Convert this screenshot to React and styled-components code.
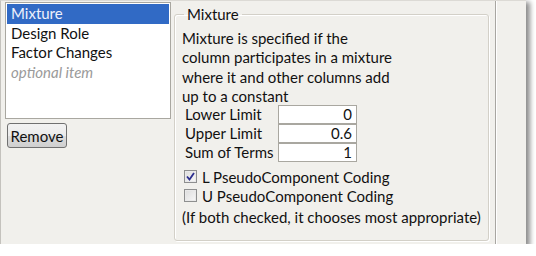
import React from 'react';
import styled, { createGlobalStyle } from 'styled-components';

const Global = createGlobalStyle`
  html, body {
    margin: 0;
    padding: 0;
    background: #ffffff;
  }
  body {
    font-family: Lato, "Noto Sans", sans-serif;
    font-size: 15px;
    color: #111;
  }
`;

const Window = styled.div`
  width: 526px;
  height: 244px;
  background: #f1f0ec;
  border-left: 1px solid #c4c2bd;
  border-top: 1px solid #dcdad5;
  box-shadow: 3px 3px 5px 1px rgba(0, 0, 0, 0.45);
  display: flex;
  box-sizing: border-box;
`;

const LeftCol = styled.div`
  width: 168px;
  padding: 1px 0 0 4px;
  display: flex;
  flex-direction: column;
  align-items: flex-start;
`;

const ListBox = styled.div`
  width: 166px;
  height: 117px;
  box-sizing: border-box;
  background: #fff;
  border: 1px solid #a9a7a0;
  padding: 1px;
`;

const ListItem = styled.div`
  height: 19.5px;
  line-height: 19px;
  padding-left: 4px;
  background: ${p => (p.$selected ? '#316ac5' : 'transparent')};
  color: ${p => (p.$selected ? '#eef0fb' : p.$muted ? '#9a9a9a' : '#111')};
  font-style: ${p => (p.$muted ? 'italic' : 'normal')};
`;

const Button = styled.button`
  margin: 4px 0 0 2px;
  width: 60px;
  height: 25px;
  border: 1px solid #707070;
  border-radius: 3px;
  background: linear-gradient(#f2f2f2, #ebebeb 50%, #dddddd 51%, #cfcfcf);
  font-family: inherit;
  font-size: 15px;
  color: #111;
  padding: 0;
`;

const Group = styled.fieldset`
  margin: 4px 0 0 1px;
  width: 315px;
  height: 236px;
  box-sizing: border-box;
  border: 1px solid #d3d0c8;
  box-shadow: inset 1px 1px 0 #fff, 1px 1px 0 #fff;
  border-radius: 3px;
  padding: 0 0 0 7px;
`;

const Legend = styled.legend`
  padding: 0 3px;
  margin-left: 2px;
  font-size: 15px;
  line-height: 18px;
`;

const Description = styled.p`
  margin: 6px 0 0;
  line-height: 19.3px;
`;

const Fields = styled.div`
  display: grid;
  grid-template-columns: 93px 79px;
  grid-auto-rows: 18px;
  row-gap: 1px;
  margin: -1px 0 0 3px;
`;

const FieldLabel = styled.div`
  line-height: 18px;
`;

const FieldValue = styled.div`
  background: #fff;
  border: 1px solid #a9a7a0;
  text-align: right;
  line-height: 17px;
  padding-right: 4px;
  box-sizing: border-box;
  height: 19px;
`;

const Checks = styled.div`
  margin-top: 7px;
  display: flex;
  flex-direction: column;
  gap: 2px;
`;

const CheckRow = styled.label`
  display: flex;
  align-items: center;
  gap: 5px;
  height: 17px;
  padding-left: 2px;
`;

const Box = styled.span`
  width: 11px;
  height: 11px;
  border: 1px solid #8e8f8f;
  background: linear-gradient(135deg, #dcdcdc, #f8f8f8);
  box-shadow: inset 0 0 0 1px #e9e9e9;
  display: flex;
  align-items: center;
  justify-content: center;
`;

const Note = styled.div`
  margin-top: 4px;
`;

const Divider = styled.div`
  margin-left: 6px;
  width: 1px;
  border-right: 1px solid #fff;
  background: #a8a6a1;
`;

const Check = ({ checked, children }) => (
  <CheckRow>
    <Box>
      {checked && (
        <svg width="9" height="9" viewBox="0 0 9 9">
          <path d="M1 4.5 L3.5 7.5 L8 1" fill="none" stroke="#2b2e8e" strokeWidth="1.8" />
        </svg>
      )}
    </Box>
    {children}
  </CheckRow>
);

const App = () => (
  <>
    <Global />
    <Window>
      <LeftCol>
        <ListBox>
          <ListItem $selected>Mixture</ListItem>
          <ListItem>Design Role</ListItem>
          <ListItem>Factor Changes</ListItem>
          <ListItem $muted>optional item</ListItem>
        </ListBox>
        <Button>Remove</Button>
      </LeftCol>
      <Group>
        <Legend>Mixture</Legend>
        <Description>
          Mixture is specified if the<br />
          column participates in a mixture<br />
          where it and other columns add<br />
          up to a constant
        </Description>
        <Fields>
          <FieldLabel>Lower Limit</FieldLabel>
          <FieldValue>0</FieldValue>
          <FieldLabel>Upper Limit</FieldLabel>
          <FieldValue>0.6</FieldValue>
          <FieldLabel>Sum of Terms</FieldLabel>
          <FieldValue>1</FieldValue>
        </Fields>
        <Checks>
          <Check checked>L PseudoComponent Coding</Check>
          <Check>U PseudoComponent Coding</Check>
        </Checks>
        <Note>(If both checked, it chooses most appropriate)</Note>
      </Group>
      <Divider />
    </Window>
  </>
);

export default App;
